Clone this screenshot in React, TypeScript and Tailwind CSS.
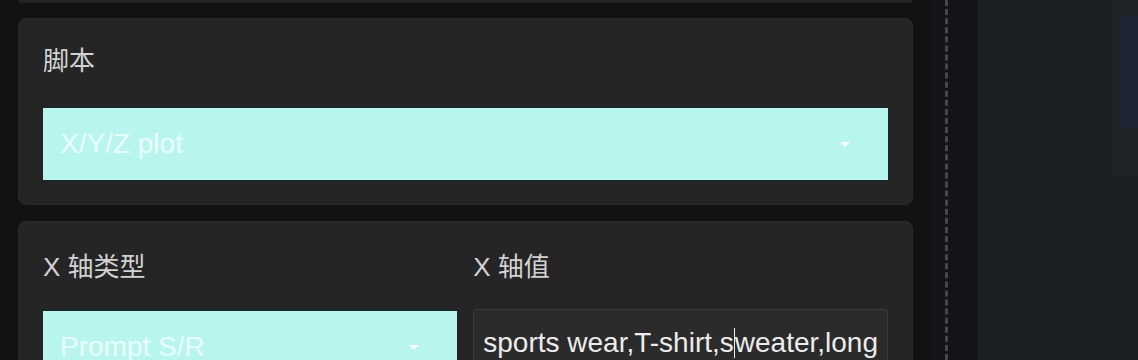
import { useState } from "react";

const font = { fontFamily: '"Liberation Sans", Arial, "Noto Sans CJK SC", sans-serif' };

function Select({ value, className }: { value: string; className?: string }) {
  return (
    <div
      className={`flex h-[72px] shrink-0 items-center justify-between bg-[#b8f5ee] pl-[17px] pr-[38px] ring-2 ring-[#1c2624] ${className ?? ""}`}
    >
      <span className="text-[28px] leading-[32px] text-[#eafffc]">{value}</span>
      <span className="h-0 w-0 border-x-[5px] border-t-[5px] border-x-transparent border-t-white" />
    </div>
  );
}

export default function App() {
  const [xValues] = useState("sports wear,T-shirt,sweater,long");

  return (
    <div className="flex h-[360px] w-[1138px] overflow-hidden bg-[#121212]" style={font}>
      <div className="flex w-[931px] flex-col">
        <div className="mx-[18px] h-[3px] shrink-0 rounded-b-lg bg-[#232323]" />
        <div className="mx-[18px] mt-[15px] flex shrink-0 flex-col rounded-lg border border-[#2b2b2b] bg-[#252525] px-[24px] pt-[26px] pb-[24px]">
          <div className="h-[32px] text-[26px] leading-[32px] text-[#d2d2d2]">脚本</div>
          <Select value="X/Y/Z plot" className="mt-[31px]" />
        </div>
        <div className="mx-[18px] mt-[16px] flex flex-1 shrink-0 gap-[16px] rounded-t-lg border border-[#2b2b2b] bg-[#252525] px-[24px] pt-[29px]">
          <div className="flex flex-1 flex-col">
            <div className="h-[32px] shrink-0 text-[26px] leading-[32px] text-[#d2d2d2]">X 轴类型</div>
            <Select value="Prompt S/R" className="mt-[28px]" />
          </div>
          <div className="flex flex-1 flex-col">
            <div className="h-[32px] shrink-0 text-[26px] leading-[32px] text-[#d2d2d2]">X 轴值</div>
            <div className="mt-[26px] flex h-[72px] shrink-0 items-start rounded border border-[#3b3b3b] bg-[#2b2b2b] px-[9px] pt-[12px]">
              <span className="text-[28px] leading-[32px] whitespace-nowrap text-[#ececec]">
                {xValues.slice(0, 21)}
                <span className="inline-block h-[30px] w-px translate-y-[6px] bg-[#ececec] align-baseline" />
                {xValues.slice(21)}
              </span>
            </div>
          </div>
        </div>
      </div>
      <div className="flex w-[47px] bg-[#141418]">
        <div className="ml-[14px] h-full border-l-[3px] border-dashed border-[#45454b]" />
      </div>
      <div className="flex flex-1 bg-[#1b1f22]">
        <div className="flex-1" />
        <div className="flex h-[176px] w-[26px] bg-[#1f2427] pt-[16px] pl-[8px]">
          <div className="h-[112px] w-full bg-[#1f2433]" />
        </div>
      </div>
    </div>
  );
}
